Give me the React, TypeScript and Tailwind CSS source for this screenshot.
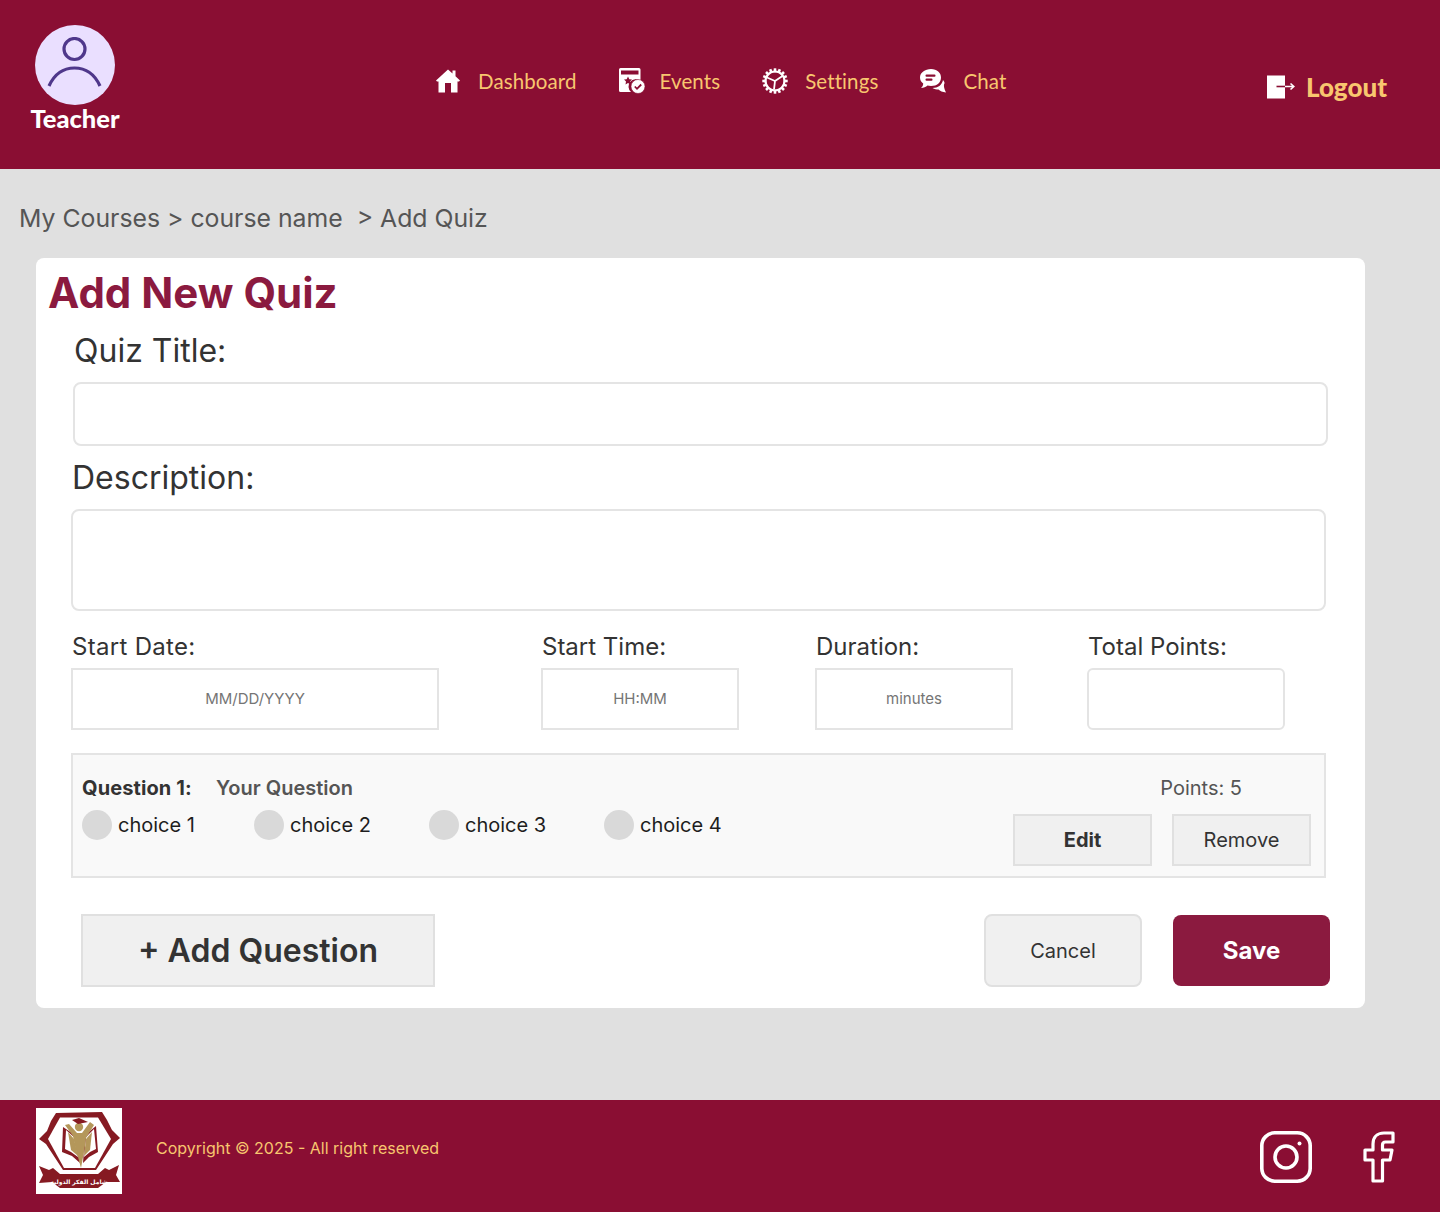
const navItems = [
  { label: "Dashboard", icon: <HomeIcon />, width: "w-[42px]" },
  { label: "Events", icon: <EventsIcon />, width: "w-[41px]" },
  { label: "Settings", icon: <GearIcon />, width: "w-[43px]" },
  { label: "Chat", icon: <ChatIcon />, width: "w-[43px]" },
];

function HomeIcon() {
  return (
    <svg width="24" height="24" viewBox="0 0 24 24" fill="#fff">
      <path d="M12 0.5 L16.5 4.6 V1.5 H19.5 V7.3 L24 11.4 L23 12.6 H21.5 V23.5 H2.5 V12.6 H1 L0 11.4 Z M9 14 V23.5 H15 V14 Z" fillRule="evenodd" />
    </svg>
  );
}

function EventsIcon() {
  return (
    <svg width="27" height="26" viewBox="0 0 27 26">
      <path d="M1.5 0 H20 A1.5 1.5 0 0 1 21.5 1.5 V13 A7 7 0 0 0 12 24 H1.5 A1.5 1.5 0 0 1 0 22.5 V1.5 A1.5 1.5 0 0 1 1.5 0 Z" fill="#fff" />
      <rect x="2" y="2.5" width="17.5" height="4" fill="#8a0e33" />
      <path d="M9 8.5 L10.3 11.2 L13 11.5 L11 13.5 L11.5 16.5 L9 15 L6.5 16.5 L7 13.5 L5 11.5 L7.7 11.2 Z" fill="#8a0e33" />
      <circle cx="19" cy="18.5" r="7" fill="#fff" stroke="#8a0e33" strokeWidth="0.6" />
      <path d="M15.8 18.5 L18 20.8 L22.2 16.5" fill="none" stroke="#8a0e33" strokeWidth="1.8" />
    </svg>
  );
}

function GearIcon() {
  const teeth = Array.from({ length: 16 }, (_, i) => (i * 360) / 16);
  return (
    <svg width="26" height="26" viewBox="0 0 26 26" fill="none" stroke="#fff">
      {teeth.map((a) => (
        <rect key={a} x="11.7" y="0.3" width="2.6" height="4" fill="#fff" stroke="none" transform={`rotate(${a} 13 13)`} />
      ))}
      <circle cx="13" cy="13" r="9.5" strokeWidth="2.2" />
      <path d="M13 13 L5 9.5 M13 13 L20.5 8 M13 13 L12 21.5" strokeWidth="1.8" />
    </svg>
  );
}

function ChatIcon() {
  return (
    <svg width="26" height="24" viewBox="0 0 26 24">
      <path d="M11 0 C17 0 21 3.6 21 8.5 C21 13.5 17 17 11 17 C9.5 17 8.4 16.8 7.5 16.5 C6 18 3.5 19 1 19 C2.5 17.8 3.2 16.3 3.2 14.6 C1.2 13 0 11 0 8.5 C0 3.6 5 0 11 0 Z" fill="#fff" />
      <rect x="5.5" y="5.5" width="10" height="2.2" rx="1" fill="#8a0e33" />
      <rect x="5.5" y="9.5" width="7" height="2.2" rx="1" fill="#8a0e33" />
      <path d="M23 11 C24.5 12.5 25 14 24 15.5 C23.7 17 24.2 20 26 23.5 C22.5 23 20 22 18.5 20.5 C16.5 20.5 14.5 20.2 12.5 19 C18 19 22 16 23 11 Z" fill="#fff" />
    </svg>
  );
}

function LogoutIcon() {
  return (
    <svg width="28" height="24" viewBox="0 0 28 24">
      <rect x="0" y="0.5" width="18" height="23" fill="#fff" />
      <path d="M9.5 11.5 H18" fill="none" stroke="#8a0e33" strokeWidth="1.6" />
      <path d="M18 11.5 H26.5 M23.5 8.5 L26.8 11.5 L23.5 14.5" fill="none" stroke="#fff" strokeWidth="1.6" />
    </svg>
  );
}

function Emblem() {
  return (
    <svg width="86" height="86" viewBox="0 0 86 86" className="block">
      <rect width="86" height="86" fill="#fff" />
      {/* shield */}
      <path d="M20 5 L66 4 L71 12 L76 22 L84 30 L77 36 L60 62 H27 L10 36 L3 31 L11 23 L15 13 Z" fill="#861a22" />
      <path d="M24 9.5 H62 L75 31 L59 60 H28 L12 31 Z" fill="#fff" />
      {/* books */}
      <path d="M27 19 L39 27 L44 55 L36 48 L26 44 Z" fill="#861a22" />
      <path d="M30 22 L38 29 L42 49 L35 44 L29 41 Z" fill="#fff" />
      <path d="M32 24 L38 31 L42 48 L35 42 Z" fill="#b4975a" />
      <path d="M60 18 L49 27 L47 55 L53 49 L62 44 Z" fill="#861a22" />
      <path d="M58 21 L50 29 L48 49 L54 44 L60 41 Z" fill="#fff" />
      <path d="M56 24 L50 31 L48 48 L54 42 Z" fill="#b4975a" />
      {/* graduate */}
      <path d="M29 17 L33 16 L41 25 H46 L54 14 L58 17 L50 30 L48 44 L45 60 L39 38 L37 28 Z" fill="#b4975a" />
      <circle cx="43" cy="19" r="4.2" fill="#b4975a" />
      <path d="M36 12 L43 10 L52 14 L42 16 Z" fill="#861a22" />
      {/* banner */}
      <path d="M3 58 L13 62 L17 60 L24 66 H62 L69 60 L73 62 L83 57 L80 67 L84 74 L70 74 L62 80 H24 L16 74 L3 75 L7 67 Z" fill="#861a22" />
      <text x="43" y="75.5" textAnchor="middle" fontSize="6" fontWeight="700" fill="#fff" fontFamily="'DejaVu Sans', sans-serif">شامل الفكر الدولية</text>
    </svg>
  );
}

function InstagramIcon() {
  return (
    <svg width="52" height="52" viewBox="0 0 52 52" fill="none" stroke="#fff" strokeWidth="3.6">
      <rect x="1.8" y="1.8" width="48.4" height="48.4" rx="13" />
      <circle cx="26" cy="26" r="11" />
      <circle cx="39.5" cy="12.5" r="2" fill="#fff" stroke="none" />
    </svg>
  );
}

function FacebookIcon() {
  return (
    <svg width="32" height="52" viewBox="0 0 32 52" fill="none" stroke="#fff" strokeWidth="3.2" strokeLinejoin="round">
      <path d="M30 2 H21 C14 2 10 6.5 10 13 V19 H2 V29 H10 V50 H19.5 V29 H27 L29 19 H19.5 V14 C19.5 12 20.5 11 22.5 11 H30 Z" />
    </svg>
  );
}

function Field({ label, placeholder, className, inputClass, labelClass }: { label: string; placeholder?: string; className: string; inputClass: string; labelClass?: string }) {
  return (
    <div className={className}>
      <div className={`whitespace-nowrap pl-[1px] text-[24px] leading-[29px] text-[#333] ${labelClass ?? ""}`}>{label}</div>
      <div className={`mt-[7px] flex h-[62px] items-center justify-center border-2 border-[#e4e4e4] bg-white text-[15px] text-[#757575] ${inputClass}`}>
        {placeholder}
      </div>
    </div>
  );
}

function Choice({ label, className }: { label: string; className: string }) {
  return (
    <div className={`flex items-center gap-[6px] ${className}`}>
      <span className="h-[30px] w-[30px] rounded-full bg-[#d9d9d9]" />
      <span className="text-[20px] leading-[30px] text-[#1e1e1e]">{label}</span>
    </div>
  );
}

export default function App() {
  return (
    <div className="flex min-h-[1212px] flex-col bg-[#e0e0e0] font-['Inter',sans-serif]">
      <header className="flex h-[169px] bg-[#8a0e33] font-['Lato',sans-serif]">
        <div className="ml-[30px] mt-[25px] flex w-[90px] flex-col items-center">
          <div className="flex h-[80px] w-[80px] items-center justify-center rounded-full bg-[#eadfff]">
            <svg width="56" height="56" viewBox="0 0 56 56" fill="none" stroke="#4f378b" strokeWidth="3.2">
              <circle cx="27.5" cy="12" r="10.5" />
              <path d="M2 49 C7 38 16 31 27.5 31 C39 31 48 38 53 49" />
            </svg>
          </div>
          <div className="-mt-[2px] whitespace-nowrap text-[25.5px] font-black leading-[30px] text-white">Teacher</div>
        </div>
        <nav className="ml-[316px] mt-[66px] flex h-[30px] items-center">
          {navItems.map((item, i) => (
            <div key={item.label} className={`flex items-center ${i === 0 ? "" : "ml-[42px]"}`}>
              <div className={`flex ${item.width}`}>{item.icon}</div>
              <span className="text-[20.5px] leading-[30px] tracking-[0.1px] text-[#f8c66f]">{item.label}</span>
            </div>
          ))}
        </nav>
        <div className="ml-auto mr-[53px] mt-[72px] flex h-[30px] items-center gap-[11px]">
          <LogoutIcon />
          <span className="text-[26px] font-black leading-[30px] text-[#f8c66f]">Logout</span>
        </div>
      </header>

      <main className="flex-1">
        <div className="ml-[19px] mt-[34px] whitespace-pre text-[24.8px] leading-[30px] text-[#555]">My Courses &gt; course name  &gt; Add Quiz</div>
        <div className="ml-[36px] mt-[25px] h-[750px] w-[1329px] rounded-lg bg-white pt-[9px]">
          <h1 className="ml-[12px] text-[42px] font-bold leading-[52px] text-[#8b1a3f]">Add New Quiz</h1>
          <div className="ml-[38px] mt-[12px] text-[32px] leading-[39px] text-[#333]">Quiz Title:</div>
          <div className="ml-[37px] mt-[12px] h-[64px] w-[1255px] rounded-lg border-2 border-[#e4e4e4]" />
          <div className="ml-[36px] mt-[12px] text-[32px] leading-[39px] text-[#333]">Description:</div>
          <div className="ml-[35px] mt-[12px] h-[102px] w-[1255px] rounded-lg border-2 border-[#e4e4e4]" />

          <div className="ml-[35px] mt-[21px] flex">
            <Field label="Start Date:" placeholder="MM/DD/YYYY" className="w-[470px]" inputClass="w-[368px]" labelClass="tracking-[0.3px]" />
            <Field label="Start Time:" placeholder="HH:MM" className="w-[274px]" inputClass="w-[198px]" />
            <Field label="Duration:" placeholder="minutes" className="w-[272px]" inputClass="w-[198px]" />
            <Field label="Total Points:" className="w-[198px]" inputClass="w-[198px] rounded-md" />
          </div>

          <div className="ml-[35px] mt-[23px] flex h-[125px] w-[1255px] border-2 border-[#e4e4e4] bg-[#f9f9f9]">
            <div className="ml-[9px] mt-[20px]">
              <div className="flex text-[20px] font-semibold leading-[26px]">
                <span className="w-[134px] font-bold tracking-[0.1px] text-[#333]">Question 1:</span>
                <span className="text-[#555]">Your Question</span>
              </div>
              <div className="mt-[9px] flex">
                <Choice label="choice 1" className="w-[172px]" />
                <Choice label="choice 2" className="w-[175px]" />
                <Choice label="choice 3" className="w-[175px]" />
                <Choice label="choice 4" className="" />
              </div>
            </div>
            <div className="ml-auto mr-[13px] mt-[20px] flex flex-col items-end">
              <div className="mr-[69px] text-[20px] leading-[26px] text-[#555]">Points: 5</div>
              <div className="mt-[13px] flex gap-[20px]">
                <div className="flex h-[52px] w-[139px] items-center justify-center border-2 border-[#e0e0e0] bg-[#f0f0f0] text-[20px] font-bold text-[#333]">Edit</div>
                <div className="flex h-[52px] w-[139px] items-center justify-center border-2 border-[#e0e0e0] bg-[#f0f0f0] text-[20px] text-[#333]">Remove</div>
              </div>
            </div>
          </div>

          <div className="ml-[45px] mt-[36px] flex w-[1249px]">
            <div className="flex h-[73px] w-[354px] items-center justify-center border-2 border-[#e0e0e0] bg-[#f0f0f0] text-[32px] font-semibold text-[#333]">+ Add Question</div>
            <div className="ml-auto flex h-[73px] w-[158px] items-center justify-center rounded-lg border-2 border-[#e0e0e0] bg-[#f0f0f0] text-[20px] text-[#333]">Cancel</div>
            <div className="ml-[31px] mt-[1px] flex h-[71px] w-[157px] items-center justify-center rounded-lg bg-[#8b1a3f] text-[24px] font-bold text-white">Save</div>
          </div>
        </div>
      </main>

      <footer className="flex h-[112px] bg-[#8a0e33]">
        <div className="ml-[36px] mt-[8px]"><Emblem /></div>
        <span className="ml-[34px] mt-[36px] text-[16px] leading-[24px] text-[#f8c66f]">Copyright © 2025 - All right reserved</span>
        <div className="ml-auto mr-[45px] mt-[31px] flex h-[52px] items-center gap-[51px]">
          <InstagramIcon />
          <FacebookIcon />
        </div>
      </footer>
    </div>
  );
}
